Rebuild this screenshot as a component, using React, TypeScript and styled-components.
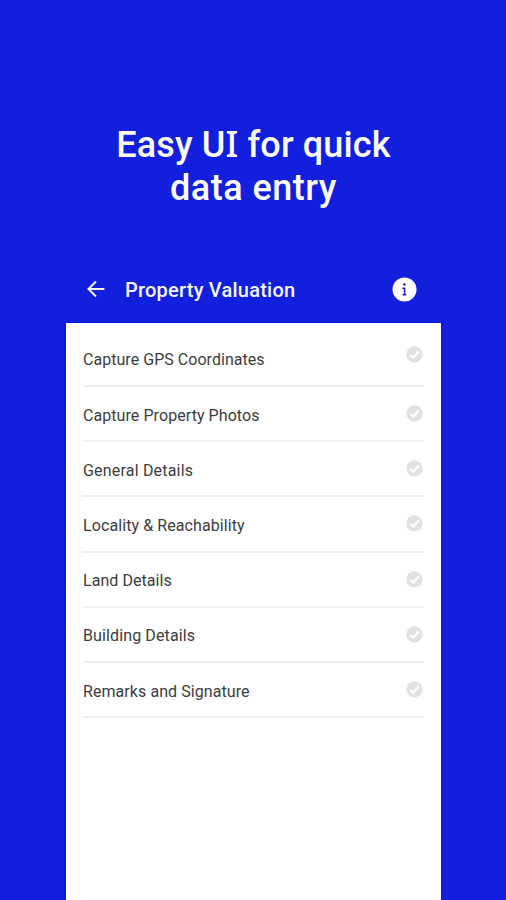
import React from 'react';
import styled, { createGlobalStyle } from 'styled-components';

const GlobalStyle = createGlobalStyle`
  * { box-sizing: border-box; }
  body { margin: 0; background: #1220de; }
`;

const Page = styled.main`
  width: 506px;
  height: 900px;
  display: flex;
  flex-direction: column;
  align-items: center;
  overflow: hidden;
  background: #1220de;
  font-family: Roboto, 'Noto Sans', sans-serif;
`;

const Headline = styled.h1`
  margin: 0;
  padding: 122px 0 0 1px;
  height: 255px;
  color: #fbfbff;
  font-size: 36px;
  line-height: 43px;
  font-weight: 500;
  text-align: center;
`;

const HeadlineRow = styled.span<{ $spacing: number }>`
  display: block;
  white-space: nowrap;
  letter-spacing: ${(p) => p.$spacing}px;
`;

const SerifCapital = styled.span`
  font-family: 'Noto Sans', sans-serif;
`;

const Phone = styled.section`
  width: 375px;
  flex: 1;
  display: flex;
  flex-direction: column;
  margin-left: 1px;
`;

const TopBar = styled.header`
  height: 68px;
  display: flex;
  align-items: center;
  padding: 0 24px 0 20px;
  color: #f5f5ff;
`;

const Title = styled.h2`
  flex: 1;
  margin: 2px 0 0 19px;
  font-size: 20px;
  line-height: 26px;
  font-weight: 500;
  white-space: nowrap;
  letter-spacing: 0.22px;
`;

const Sheet = styled.ul`
  flex: 1;
  margin: 0;
  padding: 8.8px 17px 0;
  list-style: none;
  background: #fff;
  box-shadow: 0 0 2px #0006b8;
`;

const Row = styled.li`
  height: 55.2px;
  display: flex;
  align-items: center;
  justify-content: space-between;
  border-bottom: 2px solid #efeff0;
`;

const Label = styled.span<{ $spacing: number }>`
  padding-top: 4px;
  font-size: 16px;
  line-height: 20px;
  white-space: nowrap;
  color: #3c3c3e;
  letter-spacing: ${(p) => p.$spacing}px;
`;

const CheckSlot = styled.span<{ $lift: number }>`
  display: flex;
  margin: 0 1px ${(p) => p.$lift}px 0;
`;

const items = [
  { text: 'Capture GPS Coordinates', spacing: 0.04, lift: 8 },
  { text: 'Capture Property Photos', spacing: 0.07, lift: 0 },
  { text: 'General Details', spacing: 0.19, lift: 0 },
  { text: 'Locality & Reachability', spacing: 0.09, lift: 0 },
  { text: 'Land Details', spacing: 0.05, lift: 0 },
  { text: 'Building Details', spacing: 0.12, lift: 0 },
  { text: 'Remarks and Signature', spacing: 0.07, lift: 0 },
];

const BackArrow = () => (
  <svg width="20" height="20" viewBox="0 0 20 20" fill="none" stroke="currentColor" strokeWidth="2">
    <path d="M18.4 10H3M10 2.5L2.5 10L10 17.5" />
  </svg>
);

const InfoIcon = () => (
  <svg width="25" height="25" viewBox="0 0 25 25">
    <circle cx="12.5" cy="12.5" r="12" fill="#fff" />
    <circle cx="12.4" cy="7.5" r="1.3" fill="#2a1fa8" />
    <path d="M10.4 11.2H12.6V17.5M10.6 17.8H14.2" fill="none" stroke="#2a1fa8" strokeWidth="1.6" />
  </svg>
);

const CheckIcon = () => (
  <svg width="17" height="17" viewBox="0 0 17 17">
    <circle cx="8.5" cy="8.5" r="8.2" fill="#e1e2e4" />
    <path d="M4.3 8.9L7.3 11.7L12.8 5.4" fill="none" stroke="#fff" strokeWidth="2.1" />
  </svg>
);

export default function App() {
  return (
    <Page>
      <GlobalStyle />
      <Headline>
        <HeadlineRow $spacing={0.13}>
          Easy U<SerifCapital>I</SerifCapital> for quick
        </HeadlineRow>
        <HeadlineRow $spacing={0.5}>data entry</HeadlineRow>
      </Headline>
      <Phone>
        <TopBar>
          <BackArrow />
          <Title>Property Valuation</Title>
          <InfoIcon />
        </TopBar>
        <Sheet>
          {items.map((item) => (
            <Row key={item.text}>
              <Label $spacing={item.spacing}>{item.text}</Label>
              <CheckSlot $lift={item.lift}>
                <CheckIcon />
              </CheckSlot>
            </Row>
          ))}
        </Sheet>
      </Phone>
    </Page>
  );
}
